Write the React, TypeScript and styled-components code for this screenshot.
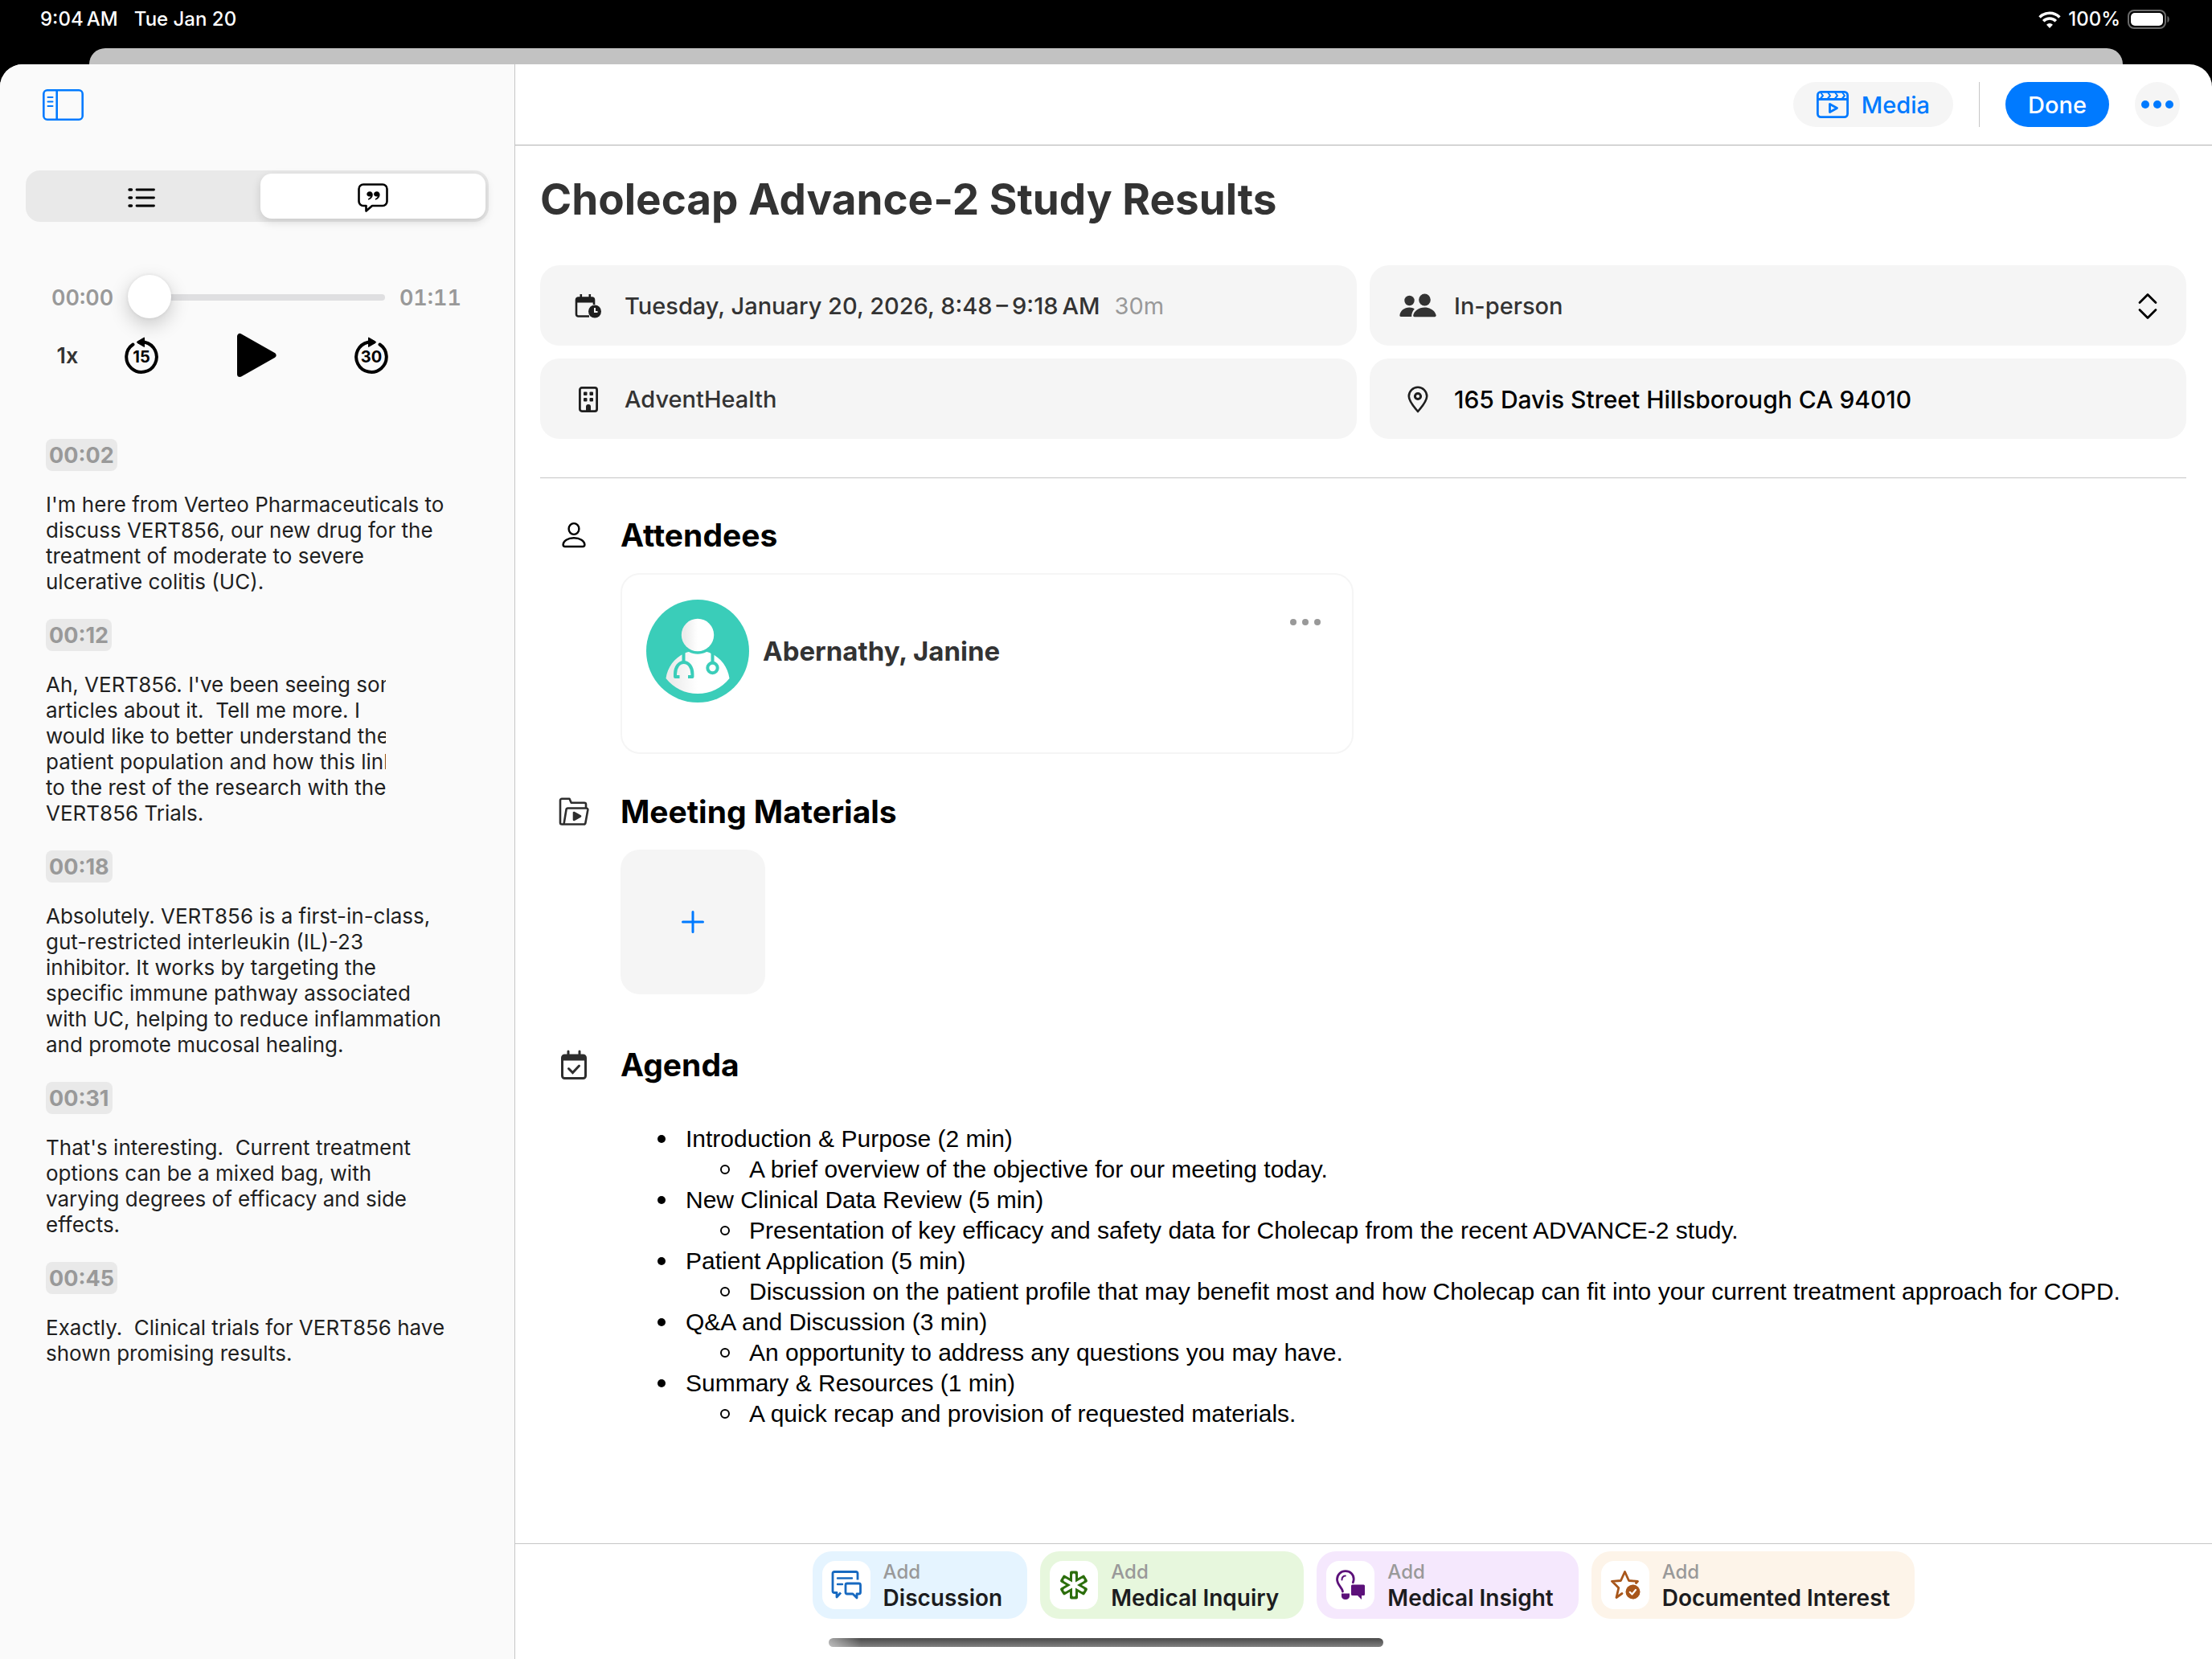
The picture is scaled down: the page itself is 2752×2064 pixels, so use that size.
import React, { useState } from "react";
import styled, { createGlobalStyle, css } from "styled-components";

const color = {
  blue: "#007aff",
  ink: "#333333",
  text: "#1f1f1f",
  muted: "#999999",
  panel: "#f5f5f5",
  sidebar: "#fafafa",
  badge: "#e9e9e9",
  line: "#c6c6c6",
};

const GlobalStyle = createGlobalStyle`
  *, *::before, *::after { box-sizing: border-box; }
  body {
    margin: 0;
    background: #000;
    color: ${color.text};
    font-family: Inter, "Liberation Sans", sans-serif;
  }
  h1, h2, p, ul { margin: 0; padding: 0; }
  button, select, input { font: inherit; }
  svg { display: block; flex: none; }
`;

const plainButton = css`
  display: inline-flex;
  align-items: center;
  justify-content: center;
  margin: 0;
  padding: 0;
  border: 0;
  background: none;
  color: inherit;
  cursor: pointer;
`;

/* ---------- device frame ---------- */

const Screen = styled.div`
  display: flex;
  flex-direction: column;
  min-height: 100vh;
  background: #000;
`;

const StatusBar = styled.header`
  display: flex;
  align-items: center;
  justify-content: space-between;
  height: 60px;
  padding: 0 51px 12px 50px;
  color: #fff;
  font-size: 24px;
  font-weight: 500;
  line-height: 32px;
`;

const StatusGroup = styled.div<{ $gap: number }>`
  display: flex;
  align-items: center;
  gap: ${(p) => p.$gap}px;
`;

const BackCard = styled.div`
  height: 20px;
  margin: 0 111px;
  border-radius: 24px 24px 0 0;
  background: #c2c2c2;
`;

const Sheet = styled.div`
  display: flex;
  flex: 1;
  overflow: hidden;
  border-radius: 28px 28px 0 0;
  background: #fff;
`;

/* ---------- sidebar ---------- */

const Sidebar = styled.aside`
  flex: none;
  width: 641px;
  border-right: 1px solid ${color.line};
  background: ${color.sidebar};
`;

const SidebarTop = styled.div`
  display: flex;
  align-items: center;
  height: 101px;
  padding: 0 53px;
`;

const IconButton = styled.button`
  ${plainButton}
`;

const Segmented = styled.div`
  display: grid;
  grid-template-columns: 1fr 1fr;
  gap: 8px;
  height: 64px;
  margin: 31px 32px 0;
  padding: 4px;
  border-radius: 18px;
  background: ${color.badge};
`;

const Segment = styled.label<{ $on: boolean }>`
  display: flex;
  align-items: center;
  justify-content: center;
  padding-top: 4px;
  border-radius: 14px;
  background: ${(p) => (p.$on ? "#fff" : "transparent")};
  box-shadow: ${(p) => (p.$on ? "0 4px 12px rgba(0,0,0,.14)" : "none")};
  cursor: pointer;

  input {
    appearance: none;
    width: 0;
    height: 0;
    margin: 0;
  }
`;

const Player = styled.section`
  padding: 66px 66px 0 64px;
`;

const Timeline = styled.div`
  display: flex;
  align-items: center;
  gap: 18px;
  height: 56px;
`;

const Time = styled.span`
  color: ${color.muted};
  font-size: 27px;
  font-weight: 600;
  font-variant-numeric: tabular-nums;
`;

const Scrubber = styled.input`
  flex: 1;
  min-width: 0;
  height: 56px;
  margin: 0;
  appearance: none;
  background: none;

  &::-webkit-slider-runnable-track {
    height: 8px;
    border-radius: 4px;
    background: #dfdfe1;
  }

  &::-webkit-slider-thumb {
    appearance: none;
    width: 54px;
    height: 54px;
    margin-top: -24px;
    border-radius: 50%;
    background: #fff;
    box-shadow: 0 8px 24px rgba(0, 0, 0, 0.2), 0 0 4px rgba(0, 0, 0, 0.08);
  }
`;

const Controls = styled.div`
  display: grid;
  grid-template-columns: 40px 1fr 1fr 1fr;
  align-items: center;
  height: 56px;
  margin-top: 16px;
  padding-right: 40px;
`;

const Speed = styled.button`
  ${plainButton}
  color: ${color.ink};
  font-size: 27px;
  font-weight: 600;
`;

const Transcript = styled.ol`
  display: flex;
  flex-direction: column;
  gap: 30px;
  margin: 76px 32px 0 57px;
  padding: 0;
  list-style: none;
`;

const Stamp = styled.button`
  ${plainButton}
  height: 40px;
  margin-bottom: 26px;
  padding: 0 4px;
  border-radius: 8px;
  background: ${color.badge};
  color: ${color.muted};
  font-size: 27px;
  font-weight: 700;
`;

const Speech = styled.p<{ $clip?: boolean }>`
  width: ${(p) => (p.$clip ? "423px" : "auto")};
  overflow: hidden;
  font-size: 26px;
  line-height: 32px;
  white-space: pre;
`;

/* ---------- main column ---------- */

const Main = styled.main`
  display: flex;
  flex: 1;
  flex-direction: column;
  min-width: 0;
`;

const Toolbar = styled.div`
  display: flex;
  align-items: center;
  justify-content: flex-end;
  gap: 32px;
  height: 101px;
  padding-right: 40px;
  border-bottom: 1px solid #b0b0b0;
`;

const Pill = styled.button<{ $primary?: boolean }>`
  ${plainButton}
  gap: 16px;
  height: 56px;
  padding: 0 ${(p) => (p.$primary ? 28 : 29)}px;
  border-radius: 28px;
  background: ${(p) => (p.$primary ? color.blue : color.panel)};
  color: ${(p) => (p.$primary ? "#fff" : color.blue)};
  font-size: 29px;
  font-weight: 500;
`;

const Divider = styled.span`
  width: 1px;
  height: 56px;
  background: ${color.line};
`;

const RoundButton = styled.button`
  ${plainButton}
  width: 56px;
  height: 56px;
  border-radius: 50%;
  background: ${color.panel};
`;

const Content = styled.div`
  flex: 1;
  padding: 35px 32px 40px 31px;
`;

const Title = styled.h1`
  color: ${color.ink};
  font-size: 53px;
  font-weight: 700;
  line-height: 64px;
`;

const Fields = styled.div`
  display: grid;
  grid-template-columns: 1fr 1fr;
  gap: 16px;
  margin-top: 50px;
  padding-bottom: 48px;
  border-bottom: 1px solid ${color.line};
`;

const Field = styled.div<{ $strong?: boolean }>`
  display: grid;
  grid-template-columns: 56px 1fr auto;
  align-items: center;
  column-gap: 17px;
  height: 100px;
  padding: 2px 36px 0 32px;
  border-radius: 24px;
  background: ${color.panel};
  color: ${(p) => (p.$strong ? "#000" : color.ink)};
  font-size: ${(p) => (p.$strong ? 30 : 29)}px;
  font-weight: 500;
  line-height: 40px;

  > svg:first-child { justify-self: center; }
`;

const DateButton = styled.button`
  ${plainButton}
  justify-content: flex-start;
  gap: 18px;
`;

const Faint = styled.span`
  color: ${color.muted};
  font-weight: 400;
`;

const TypeSelect = styled.select`
  width: 100%;
  padding: 0;
  border: 0;
  appearance: none;
  background: none;
  color: inherit;
`;

const Section = styled.section<{ $space: number }>`
  display: grid;
  grid-template-columns: 84px 1fr;
  column-gap: 16px;
  row-gap: 24px;
  align-items: center;
  margin-top: ${(p) => p.$space}px;

  > svg { justify-self: center; }
`;

const Heading = styled.h2`
  color: #000;
  font-size: 39px;
  font-weight: 700;
  line-height: 47px;
`;

const SectionBody = styled.div`
  grid-column: 2;
`;

const Attendee = styled.article`
  display: flex;
  align-items: center;
  gap: 17px;
  width: 45%;
  min-width: 912px;
  height: 225px;
  padding: 0 39px 32px 30px;
  border: 2px solid ${color.panel};
  border-radius: 24px;
`;

const Name = styled.p`
  flex: 1;
  color: ${color.ink};
  font-size: 33px;
  font-weight: 700;
  line-height: 40px;
`;

const MoreButton = styled.button`
  ${plainButton}
  align-self: flex-start;
  height: 40px;
  margin-top: 39px;
`;

const AddTile = styled.button`
  ${plainButton}
  width: 180px;
  height: 180px;
  border-radius: 24px;
  background: ${color.panel};
`;

const AgendaList = styled.ul`
  padding: 26px 0 0 45px;
  color: #000;
  font-family: "Liberation Sans", Arial, sans-serif;
  font-size: 30px;
  line-height: 38px;
  list-style: none;
`;

const AgendaSub = styled.ul`
  padding-left: 79px;
  list-style: none;
`;

const AgendaLine = styled.span<{ $hollow?: boolean }>`
  display: flex;
  align-items: center;

  &::before {
    content: "";
    width: 12px;
    height: 12px;
    margin-right: 24px;
    border: ${(p) => (p.$hollow ? "2px solid #000" : "1px solid transparent")};
    border-radius: 50%;
    background: ${(p) => (p.$hollow ? "transparent" : "#000")};
    background-clip: padding-box;
  }
`;

/* ---------- footer ---------- */

const Footer = styled.footer`
  display: flex;
  align-items: flex-start;
  justify-content: center;
  gap: 16px;
  height: 144px;
  padding-top: 9px;
  border-top: 1px solid ${color.line};
`;

const AddButton = styled.button<{ $tint: string }>`
  ${plainButton}
  gap: 16px;
  height: 84px;
  padding: 0 31px 0 12px;
  border-radius: 24px;
  background: ${(p) => p.$tint};
  text-align: left;
`;

const AddIcon = styled.span`
  display: flex;
  align-items: center;
  justify-content: center;
  width: 60px;
  height: 60px;
  border-radius: 16px;
  background: #fff;
`;

const AddText = styled.span`
  display: flex;
  flex-direction: column;
  color: #1c1c1e;
  font-size: 28px;
  font-weight: 600;
  line-height: 32px;
`;

const AddHint = styled.span`
  color: ${color.muted};
  font-size: 24px;
  font-weight: 500;
`;

const HomeBar = styled.div`
  position: fixed;
  bottom: 15px;
  left: 50%;
  width: 690px;
  height: 11px;
  margin-left: -345px;
  border-radius: 6px;
  background: linear-gradient(90deg, rgba(255, 255, 255, 0.5), transparent 40px),
    linear-gradient(#4a4a4a, #808080);
`;

/* ---------- icons ---------- */

const WifiIcon = () => (
  <svg width="28" height="21" viewBox="0 0 28 21" fill="none" stroke="#fff" strokeWidth="3.6">
    <path d="M1.6 7.4a17.5 17.5 0 0 1 24.8 0" />
    <path d="M6.2 12.2a11 11 0 0 1 15.6 0" />
    <path d="M14 21l-4-4.3a5.8 5.8 0 0 1 8 0z" fill="#fff" stroke="none" />
  </svg>
);

const BatteryIcon = () => (
  <svg width="54" height="24" viewBox="0 0 54 24">
    <rect x="1" y="1" width="46" height="22" rx="7" fill="none" stroke="#6b6b6b" strokeWidth="2" />
    <rect x="4" y="4" width="40" height="16" rx="5" fill="#fff" />
    <path d="M49.500 8c3 1 3 7 0 8z" fill="#6b6b6b" />
  </svg>
);

const SidebarIcon = () => (
  <svg width="51" height="39" viewBox="0 0 51 39" fill="none" stroke={color.blue} strokeWidth="2.600">
    <rect x="1.300" y="1.300" width="48.400" height="36.400" rx="4.500" />
    <path d="M17.700 1v37" />
    <path d="M6.500 10h6M6.500 15.500h6M6.500 21h6" strokeWidth="2" strokeLinecap="round" />
  </svg>
);

const ListIcon = () => (
  <svg width="34" height="26" viewBox="0 0 34 26" fill="none" stroke="#000" strokeLinecap="round">
    <path d="M11 3h21.500M11 13h21.500M11 23h21.500" strokeWidth="2.800" />
    <path d="M2 3h2.500M2 13h2.500M2 23h2.500" strokeWidth="3.400" />
  </svg>
);

const QuoteIcon = () => (
  <svg width="38" height="36" viewBox="0 0 38 36">
    <path
      d="M7 1.500h24a5.500 5.500 0 0 1 5.500 5.500v15.500a5.500 5.500 0 0 1-5.500 5.500H18l-7.500 6.500V28H7a5.500 5.500 0 0 1-5.500-5.500V7A5.500 5.500 0 0 1 7 1.500z"
      fill="none"
      stroke="#000"
      strokeWidth="2.600"
      strokeLinejoin="round"
    />
    <path d="M15 10.200c2.400 0 3.800 1.700 3.800 4 0 3.200-2.100 5.600-5.400 6.500l-.6-1.200c1.800-.7 3-1.800 3.200-3.200-3 .7-4.700-.8-4.700-2.800 0-1.900 1.500-3.300 3.700-3.300z" />
    <path d="M23.800 10.200c2.400 0 3.800 1.700 3.800 4 0 3.200-2.100 5.600-5.400 6.500l-.6-1.200c1.800-.7 3-1.800 3.200-3.200-3 .7-4.700-.8-4.700-2.800 0-1.900 1.500-3.300 3.700-3.300z" />
  </svg>
);

const SkipIcon = ({ seconds, forward }: { seconds: number; forward?: boolean }) => (
  <svg width="42" height="46" viewBox="0 0 42 46">
    <g transform={forward ? "translate(42 0) scale(-1 1)" : undefined}>
      <path
        d="M10.500 9.500A18.800 18.800 0 1 0 25 6.700"
        fill="none"
        stroke="#000"
        strokeWidth="4"
        strokeLinecap="round"
      />
      <path d="M24.500 1v11.500L16 7.600a1 1 0 0 1 0-1.700z" stroke="#000" strokeWidth="1" strokeLinejoin="round" />
    </g>
    <text
      x="21"
      y="32"
      textAnchor="middle"
      fontFamily="Inter, sans-serif"
      fontSize="20"
      fontWeight="700"
    >
      {seconds}
    </text>
  </svg>
);

const PlayIcon = () => (
  <svg width="50" height="56" viewBox="0 0 50 56">
    <path d="M4.500 4.500v47L46 28z" stroke="#000" strokeWidth="7" strokeLinejoin="round" />
  </svg>
);

const MediaIcon = () => (
  <svg
    width="40"
    height="34"
    viewBox="0 0 40 34"
    fill="none"
    stroke={color.blue}
    strokeWidth="2.800"
    strokeLinejoin="round"
  >
    <rect x="1.400" y="1.400" width="37.200" height="31.200" rx="4" />
    <path d="M1.500 10.500h37" />
    <path d="M5 2l3 4-3 3.500M14 2l3 4-3 3.500M23 2l3 4-3 3.500M32 2l3 4-3 3.500" strokeWidth="2" />
    <path d="M16.500 16.500v10l9-5z" />
  </svg>
);

const Dots = ({ size, gap, fill }: { size: number; gap: number; fill: string }) => {
  const width = size * 3 + gap * 2;
  const r = size / 2;
  return (
    <svg width={width} height={size} viewBox={`0 0 ${width} ${size}`} fill={fill}>
      {[0, 1, 2].map((i) => (
        <circle key={i} cx={r + i * (size + gap)} cy={r} r={r} />
      ))}
    </svg>
  );
};

const CalendarClockIcon = () => (
  <svg width="34" height="32" viewBox="0 0 34 32">
    <path
      d="M18 28.500H4.500A2.500 2.500 0 0 1 2 26V8a2.500 2.500 0 0 1 2.500-2.500h17A2.500 2.500 0 0 1 24 8v6"
      fill="none"
      stroke="#1f1f1f"
      strokeWidth="2.600"
    />
    <path d="M2 5.500h22v6H2zM6.500 1h2.600v5H6.500zM17.500 1h2.600v5h-2.600z" fill="#1f1f1f" />
    <circle cx="25" cy="22.500" r="8" fill="#1f1f1f" />
    <path d="M25 18v5h3.500" fill="none" stroke="#f5f5f5" strokeWidth="2" />
  </svg>
);

const BuildingIcon = () => (
  <svg width="26" height="34" viewBox="0 0 26 34" fill="#1f1f1f">
    <rect x="2.400" y="2.400" width="21.200" height="29.200" rx="2.500" fill="none" stroke="#1f1f1f" strokeWidth="2.800" />
    <rect x="7" y="7.500" width="4.500" height="4.500" rx="1" />
    <rect x="14.500" y="7.500" width="4.500" height="4.500" rx="1" />
    <rect x="7" y="15" width="4.500" height="4.500" rx="1" />
    <rect x="14.500" y="15" width="4.500" height="4.500" rx="1" />
    <path d="M10 31v-5a3 3 0 0 1 6 0v5z" />
  </svg>
);

const PeopleIcon = () => (
  <svg width="46" height="32" viewBox="0 0 46 32" fill={color.ink}>
    <circle cx="12.500" cy="9" r="6.200" />
    <ellipse cx="31.500" cy="8" rx="7.300" ry="7.400" />
    <path d="M12.500 17.500c2.500 0 4.600.7 6.300 1.900-2.500 2.600-3.800 6.200-3.600 9.600H2c-1 0-1.700-.7-1.600-1.700C1 21.800 6 17.500 12.500 17.500z" />
    <path d="M31.500 17.500c7.500 0 13.300 4.600 14.200 9.800.2 1-.6 1.900-1.600 1.900H18.800c-1 0-1.700-.9-1.600-1.900.9-5.200 6.800-9.800 14.300-9.800z" />
  </svg>
);

const PinIcon = () => (
  <svg width="28" height="34" viewBox="0 0 28 34" fill="none" stroke="#1f1f1f">
    <path
      d="M14 32C9.500 26.500 2.800 19.500 2.800 13A11.200 11.200 0 0 1 25.200 13C25.200 19.500 18.500 26.500 14 32z"
      strokeWidth="2.600"
      strokeLinejoin="round"
    />
    <circle cx="14" cy="13" r="3.600" strokeWidth="3" />
  </svg>
);

const UpDownIcon = () => (
  <svg width="24" height="34" viewBox="0 0 24 34" fill="none" stroke="#000" strokeWidth="2.800" strokeLinecap="round" strokeLinejoin="round">
    <path d="M2 12.500L12 2.500l10 10M2 21.500l10 10 10-10" />
  </svg>
);

const PersonIcon = () => (
  <svg width="32" height="34" viewBox="0 0 32 34" fill="none" stroke="#000" strokeWidth="2.400">
    <ellipse cx="16" cy="9" rx="6.400" ry="6.900" />
    <path d="M16 20.200c7.600 0 13.400 4 13.400 8.600 0 1.600-.8 2.200-2.400 2.200H5c-1.600 0-2.400-.6-2.400-2.200 0-4.600 5.800-8.600 13.400-8.600z" />
  </svg>
);

const FolderPlayIcon = () => (
  <svg width="38" height="36" viewBox="0 0 38 36" fill="none" stroke="#2e2e2e" strokeWidth="2.600" strokeLinejoin="round">
    <path d="M6 33.500H4A2 2 0 0 1 2 31.500V3.800a2 2 0 0 1 2-2h9.500l2.200 5H32a2 2 0 0 1 2 2v5" />
    <path d="M11.500 13.500h22.800a2 2 0 0 1 2 2.300l-2.900 16a2 2 0 0 1-2 1.700H6.500l3-18.300a2 2 0 0 1 2-1.700z" />
    <path d="M19 19v9l8-4.500z" fill="#2e2e2e" />
  </svg>
);

const CalendarCheckIcon = () => (
  <svg width="34" height="38" viewBox="0 0 34 38" fill="none" stroke="#2e2e2e" strokeWidth="3">
    <rect x="2.500" y="7" width="29" height="28.500" rx="3" />
    <path d="M3 6.500h28v7H3z" fill="#2e2e2e" stroke="none" />
    <path d="M10 2v5M24 2v5" strokeLinecap="round" />
    <path d="M10.500 23.500l5 5 8-8.500" strokeLinecap="round" />
  </svg>
);

const PlusIcon = () => (
  <svg width="28" height="28" viewBox="0 0 28 28" stroke={color.blue} strokeWidth="3" strokeLinecap="round">
    <path d="M14 1.500v25M1.500 14h25" />
  </svg>
);

const DoctorAvatar = () => (
  <svg width="128" height="128" viewBox="0 0 128 128" role="img" aria-label="Doctor">
    <defs>
      <linearGradient id="coat" x1="0" x2="1">
        <stop offset="0.100" stopColor="#ececec" />
        <stop offset="0.500" stopColor="#ffffff" />
      </linearGradient>
    </defs>
    <circle cx="64" cy="64" r="64" fill="#3acdb9" />
    <circle cx="64" cy="44" r="20.200" fill="url(#coat)" />
    <path
      d="M53 65c3.500 1.800 7 2.700 11 2.700s7.500-.9 11-2.700c2 .3 4 .8 5.500 2 12.500 5.500 21 17 23 31C94 110 80 117 64 117S34 110 24.500 98c2-14 10.500-25.500 23-31 1.500-1.200 3.500-1.700 5.500-2z"
      fill="url(#coat)"
    />
    <g fill="none" stroke="#3acdb9" strokeWidth="4">
      <path d="M46.500 64v14M82.500 64v14" />
      <path d="M41.500 96H36v-3.500c0-8.500 4.800-14.500 10.700-14.500s10.700 6 10.700 14.500V96H52" strokeLinejoin="round" />
      <circle cx="82.500" cy="85" r="6.200" />
    </g>
  </svg>
);

const DiscussionIcon = () => (
  <svg width="38" height="36" viewBox="0 0 38 36" fill="none" stroke="#1769c0" strokeWidth="2.800" strokeLinejoin="round">
    <path d="M33 11.500V3.500a2 2 0 0 0-2-2H4a2 2 0 0 0-2 2v22a2 2 0 0 0 2 2h3v5.500l5-5.500" />
    <path d="M8 9.500h18M8 17h6" strokeWidth="2.400" strokeLinecap="round" />
    <path d="M20 16h14.500a2 2 0 0 1 2 2v9a2 2 0 0 1-2 2H32v5l-5-5h-7a2 2 0 0 1-2-2v-9a2 2 0 0 1 2-2z" />
  </svg>
);

const MedicalIcon = () => {
  const arms = (width: number, height: number) =>
    [0, 60, 120].map((turn) => (
      <rect
        key={turn}
        x={19 - width / 2}
        y={18 - height / 2}
        width={width}
        height={height}
        rx="2"
        transform={`rotate(${turn} 19 18)`}
      />
    ));
  return (
    <svg width="38" height="36" viewBox="0 0 38 36">
      <g fill="#2c6e0c">{arms(10, 35)}</g>
      <g fill="#fff">{arms(4, 29)}</g>
    </svg>
  );
};

const InsightIcon = () => (
  <svg width="38" height="38" viewBox="0 0 38 38" fill="#5c117a">
    <path
      d="M9.500 27c-.5-5-7-8-7-15.200A10.300 10.300 0 0 1 13 1.700c6 0 10.200 4.300 10.200 9.800 0 1.800-.4 3-.9 4.200"
      fill="none"
      stroke="#5c117a"
      strokeWidth="2.800"
      strokeLinecap="round"
    />
    <path d="M8.500 12.500c0-3 1.700-4.800 4.300-5" fill="none" stroke="#5c117a" strokeWidth="2" strokeLinecap="round" />
    <path d="M8 29.500h10v3.500c0 2.200-2 4-5 4s-5-1.800-5-4z" />
    <path d="M21.500 18.500h14a1.500 1.500 0 0 1 1.500 1.500v10.500a1.500 1.500 0 0 1-1.500 1.500H33v5l-5-5h-6.500a1.500 1.500 0 0 1-1.500-1.500V20a1.500 1.500 0 0 1 1.500-1.500z" />
  </svg>
);

const InterestIcon = () => (
  <svg width="38" height="38" viewBox="0 0 38 38" fill="none" stroke="#a8561a" strokeWidth="2.800" strokeLinejoin="round" strokeLinecap="round">
    <path d="M15 29.500L8 34.500l2.800-12L2.500 14.300l11-.8L18.500 2.500l5 11 11 .8-2 2.200" />
    <circle cx="28.500" cy="27.500" r="9" fill="#a8561a" stroke="none" />
    <path d="M24.800 27.800l2.700 2.700 4.500-5.500" stroke="#fff" strokeWidth="2.200" />
  </svg>
);

/* ---------- data ---------- */

const transcript = [
  {
    time: "00:02",
    text: "I'm here from Verteo Pharmaceuticals to\ndiscuss VERT856, our new drug for the\ntreatment of moderate to severe\nulcerative colitis (UC).",
  },
  {
    time: "00:12",
    clip: true,
    text: "Ah, VERT856. I've been seeing some\narticles about it.  Tell me more. I\nwould like to better understand the\npatient population and how this links\nto the rest of the research with the\nVERT856 Trials.",
  },
  {
    time: "00:18",
    text: "Absolutely. VERT856 is a first-in-class,\ngut-restricted interleukin (IL)-23\ninhibitor. It works by targeting the\nspecific immune pathway associated\nwith UC, helping to reduce inflammation\nand promote mucosal healing.",
  },
  {
    time: "00:31",
    text: "That's interesting.  Current treatment\noptions can be a mixed bag, with\nvarying degrees of efficacy and side\neffects.",
  },
  {
    time: "00:45",
    text: "Exactly.  Clinical trials for VERT856 have\nshown promising results.",
  },
];

const agenda = [
  ["Introduction & Purpose (2 min)", "A brief overview of the objective for our meeting today."],
  [
    "New Clinical Data Review (5 min)",
    "Presentation of key efficacy and safety data for Cholecap from the recent ADVANCE-2 study.",
  ],
  [
    "Patient Application (5 min)",
    "Discussion on the patient profile that may benefit most and how Cholecap can fit into your current treatment approach for COPD.",
  ],
  ["Q&A and Discussion (3 min)", "An opportunity to address any questions you may have."],
  ["Summary & Resources (1 min)", "A quick recap and provision of requested materials."],
];

const actions = [
  { label: "Discussion", tint: "#e5f4ff", icon: <DiscussionIcon /> },
  { label: "Medical Inquiry", tint: "#e7f7dd", icon: <MedicalIcon /> },
  { label: "Medical Insight", tint: "#f5e8fd", icon: <InsightIcon /> },
  { label: "Documented Interest", tint: "#fdf4e9", icon: <InterestIcon /> },
];

export default function App() {
  const [tab, setTab] = useState("transcript");
  const [position, setPosition] = useState(0);

  return (
    <Screen>
      <GlobalStyle />
      <StatusBar>
        <StatusGroup $gap={20}>
          <span>9:04{"\u2009"}AM</span>
          <span>Tue Jan 20</span>
        </StatusGroup>
        <StatusGroup $gap={9}>
          <WifiIcon />
          <span>100%</span>
          <BatteryIcon />
        </StatusGroup>
      </StatusBar>
      <BackCard />
      <Sheet>
        <Sidebar>
          <SidebarTop>
            <IconButton aria-label="Toggle sidebar">
              <SidebarIcon />
            </IconButton>
          </SidebarTop>
          <Segmented role="radiogroup" aria-label="Sidebar view">
            <Segment $on={tab === "outline"}>
              <input
                type="radio"
                name="view"
                aria-label="Outline"
                checked={tab === "outline"}
                onChange={() => setTab("outline")}
              />
              <ListIcon />
            </Segment>
            <Segment $on={tab === "transcript"}>
              <input
                type="radio"
                name="view"
                aria-label="Transcript"
                checked={tab === "transcript"}
                onChange={() => setTab("transcript")}
              />
              <QuoteIcon />
            </Segment>
          </Segmented>
          <Player>
            <Timeline>
              <Time>00:00</Time>
              <Scrubber
                type="range"
                aria-label="Playback position"
                min={0}
                max={71}
                value={position}
                onChange={(e) => setPosition(Number(e.target.value))}
              />
              <Time>01:11</Time>
            </Timeline>
            <Controls>
              <Speed aria-label="Playback speed">1x</Speed>
              <IconButton aria-label="Back 15 seconds">
                <SkipIcon seconds={15} />
              </IconButton>
              <IconButton aria-label="Play">
                <PlayIcon />
              </IconButton>
              <IconButton aria-label="Forward 30 seconds">
                <SkipIcon seconds={30} forward />
              </IconButton>
            </Controls>
          </Player>
          <Transcript>
            {transcript.map((entry) => (
              <li key={entry.time}>
                <Stamp>{entry.time}</Stamp>
                <Speech $clip={entry.clip}>{entry.text}</Speech>
              </li>
            ))}
          </Transcript>
        </Sidebar>
        <Main>
          <Toolbar>
            <Pill>
              <MediaIcon />
              Media
            </Pill>
            <Divider />
            <Pill $primary>Done</Pill>
            <RoundButton aria-label="More">
              <Dots size={10} gap={5} fill={color.blue} />
            </RoundButton>
          </Toolbar>
          <Content>
            <Title>Cholecap Advance-2 Study Results</Title>
            <Fields>
              <Field>
                <CalendarClockIcon />
                <DateButton>
                  <span>
                    Tuesday, January 20, 2026, 8:48{"\u2009"}–{"\u2009"}9:18{"\u2009"}AM
                  </span>
                  <Faint>30m</Faint>
                </DateButton>
              </Field>
              <Field>
                <PeopleIcon />
                <TypeSelect aria-label="Meeting type" defaultValue="In-person">
                  <option>In-person</option>
                </TypeSelect>
                <UpDownIcon />
              </Field>
              <Field>
                <BuildingIcon />
                <span>AdventHealth</span>
              </Field>
              <Field $strong>
                <PinIcon />
                <span>165 Davis Street Hillsborough CA 94010</span>
              </Field>
            </Fields>
            <Section $space={47}>
              <PersonIcon />
              <Heading>Attendees</Heading>
              <SectionBody>
                <Attendee>
                  <DoctorAvatar />
                  <Name>Abernathy, Janine</Name>
                  <MoreButton aria-label="Attendee options">
                    <Dots size={8} gap={7} fill={color.muted} />
                  </MoreButton>
                </Attendee>
              </SectionBody>
            </Section>
            <Section $space={48}>
              <FolderPlayIcon />
              <Heading>Meeting Materials</Heading>
              <SectionBody>
                <AddTile aria-label="Add meeting material">
                  <PlusIcon />
                </AddTile>
              </SectionBody>
            </Section>
            <Section $space={64}>
              <CalendarCheckIcon />
              <Heading>Agenda</Heading>
              <SectionBody>
                <AgendaList>
                  {agenda.map(([topic, detail]) => (
                    <li key={topic}>
                      <AgendaLine>{topic}</AgendaLine>
                      <AgendaSub>
                        <li>
                          <AgendaLine $hollow>{detail}</AgendaLine>
                        </li>
                      </AgendaSub>
                    </li>
                  ))}
                </AgendaList>
              </SectionBody>
            </Section>
          </Content>
          <Footer>
            {actions.map((action) => (
              <AddButton key={action.label} $tint={action.tint}>
                <AddIcon>{action.icon}</AddIcon>
                <AddText>
                  <AddHint>Add</AddHint>
                  {action.label}
                </AddText>
              </AddButton>
            ))}
          </Footer>
        </Main>
      </Sheet>
      <HomeBar />
    </Screen>
  );
}
